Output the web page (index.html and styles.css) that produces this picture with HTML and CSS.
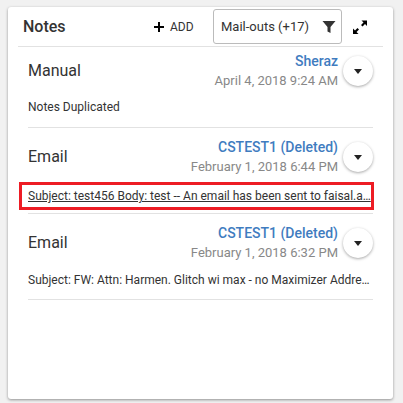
FILE: index.html
```html
<!DOCTYPE html>
<html lang="en">
<head>
    <meta charset="UTF-8">
    <title>Notes</title>
    <link rel="stylesheet" href="styles.css">
</head>
<body>
    <div class="card">
        <div class="card-header">
            <h1>Notes</h1>
            <a class="add-btn">
                <svg width="12" height="12" viewBox="0 0 12 12"><path d="M5 1h2v4h4v2H7v4H5V7H1V5h4z"/></svg>
                <span>ADD</span>
            </a>
            <div class="filter-box">
                <span>Mail-outs (+17)</span>
                <svg width="14" height="14" viewBox="0 0 14 14"><path d="M0.500 1h13L8.500 7v6L5.500 11.500V7z"/></svg>
            </div>
            <svg class="expand" width="16" height="16" viewBox="0 0 16 16"><path d="M9.500 1.500H15V7l-2-2-2.500 2.500-1.500-1.500L11.500 3.500zM6.500 15H1V9.500l2 2L5.500 9 7 10.500 4.500 13z"/></svg>
        </div>

        <div class="note note-first">
            <div class="note-head">
                <div class="note-type">Manual</div>
                <div class="note-meta">
                    <div class="note-author">Sheraz</div>
                    <div class="note-date">April 4, 2018 9:24 AM</div>
                </div>
                <button class="note-toggle"><i></i></button>
            </div>
            <div class="note-body">Notes Duplicated</div>
        </div>

        <div class="note">
            <div class="note-head">
                <div class="note-type">Email</div>
                <div class="note-meta">
                    <div class="note-author">CSTEST1 (Deleted)</div>
                    <div class="note-date">February 1, 2018 6:44 PM</div>
                </div>
                <button class="note-toggle"><i></i></button>
            </div>
            <div class="note-body highlighted">Subject: test456 Body: test -- An email has been sent to faisal.a…</div>
        </div>

        <div class="note">
            <div class="note-head">
                <div class="note-type">Email</div>
                <div class="note-meta">
                    <div class="note-author">CSTEST1 (Deleted)</div>
                    <div class="note-date">February 1, 2018 6:32 PM</div>
                </div>
                <button class="note-toggle"><i></i></button>
            </div>
            <div class="note-body">Subject: FW: Attn: Harmen. Glitch wi max - no Maximizer Addre…</div>
        </div>
    </div>
</body>
</html>
```
FILE: styles.css
```css
html, body {
    height: 100%;
}
body {
    font-family: Roboto, Arial, sans-serif;
    margin: 0;
    padding: 7px 10px 4px 8px;
    box-sizing: border-box;
    background: #f1f1f1;
    color: #333;
    overflow: hidden;
}
.card {
    height: 100%;
    box-sizing: border-box;
    background: #fff;
    border-radius: 3px;
    padding: 0 10px;
    box-shadow: 0 1px 3px rgba(0, 0, 0, 0.4);
}
.card-header {
    display: flex;
    align-items: center;
    height: 39px;
    padding: 0 5px;
    border-bottom: 1px solid #e2e2e2;
}
.card-header h1 {
    margin: 0;
    font-size: 16px;
    font-weight: 500;
    color: #333;
    width: 130px;
}
.add-btn {
    display: flex;
    align-items: center;
    gap: 5px;
    font-size: 12px;
    color: #333;
    width: 55px;
}
.filter-box {
    display: flex;
    align-items: center;
    justify-content: space-between;
    box-sizing: border-box;
    width: 129px;
    height: 35px;
    margin-left: 5px;
    padding: 0 5px 0 7px;
    border: 1px solid #bbb;
    border-radius: 3px;
    font-size: 13px;
}
.filter-box svg path {
    fill: #333;
}
.expand {
    margin-left: 10px;
}
.note {
    height: 86px;
    box-sizing: border-box;
    margin: 0 10px;
    border-bottom: 1px solid #e2e2e2;
}
.note-first {
    height: 81px;
}
.note-head {
    display: flex;
    align-items: center;
    height: 53px;
    padding-top: 5px;
    box-sizing: border-box;
}
.note-first .note-head {
    height: 43px;
}
.note-type {
    flex: 1;
    font-size: 16px;
    margin-bottom: 2px;
    color: #333;
}
.note-meta {
    text-align: right;
    line-height: 20px;
}
.note-author {
    font-size: 14px;
    font-weight: 500;
    color: #3f7cbf;
}
.note-date {
    font-size: 13px;
    color: #888;
}
.note-toggle {
    width: 30px;
    height: 30px;
    margin-left: 5px;
    padding: 0;
    border: none;
    border-radius: 50%;
    background: #fff;
    box-shadow: 0 1px 3px rgba(0, 0, 0, 0.35);
    display: flex;
    align-items: center;
    justify-content: center;
}
.note-toggle i {
    border-left: 4px solid transparent;
    border-right: 4px solid transparent;
    border-top: 5px solid #222;
}
.note-body {
    font-size: 12px;
    line-height: 16px;
    margin-top: 5px;
    color: #333;
    white-space: nowrap;
}
.note-first .note-body {
    margin-top: 9px;
}
.highlighted {
    text-decoration: underline;
    margin: 1px -1px 0 -9px;
    padding: 3px 0 3px 6px;
    border: 3px solid #ed1c24;
}
```
